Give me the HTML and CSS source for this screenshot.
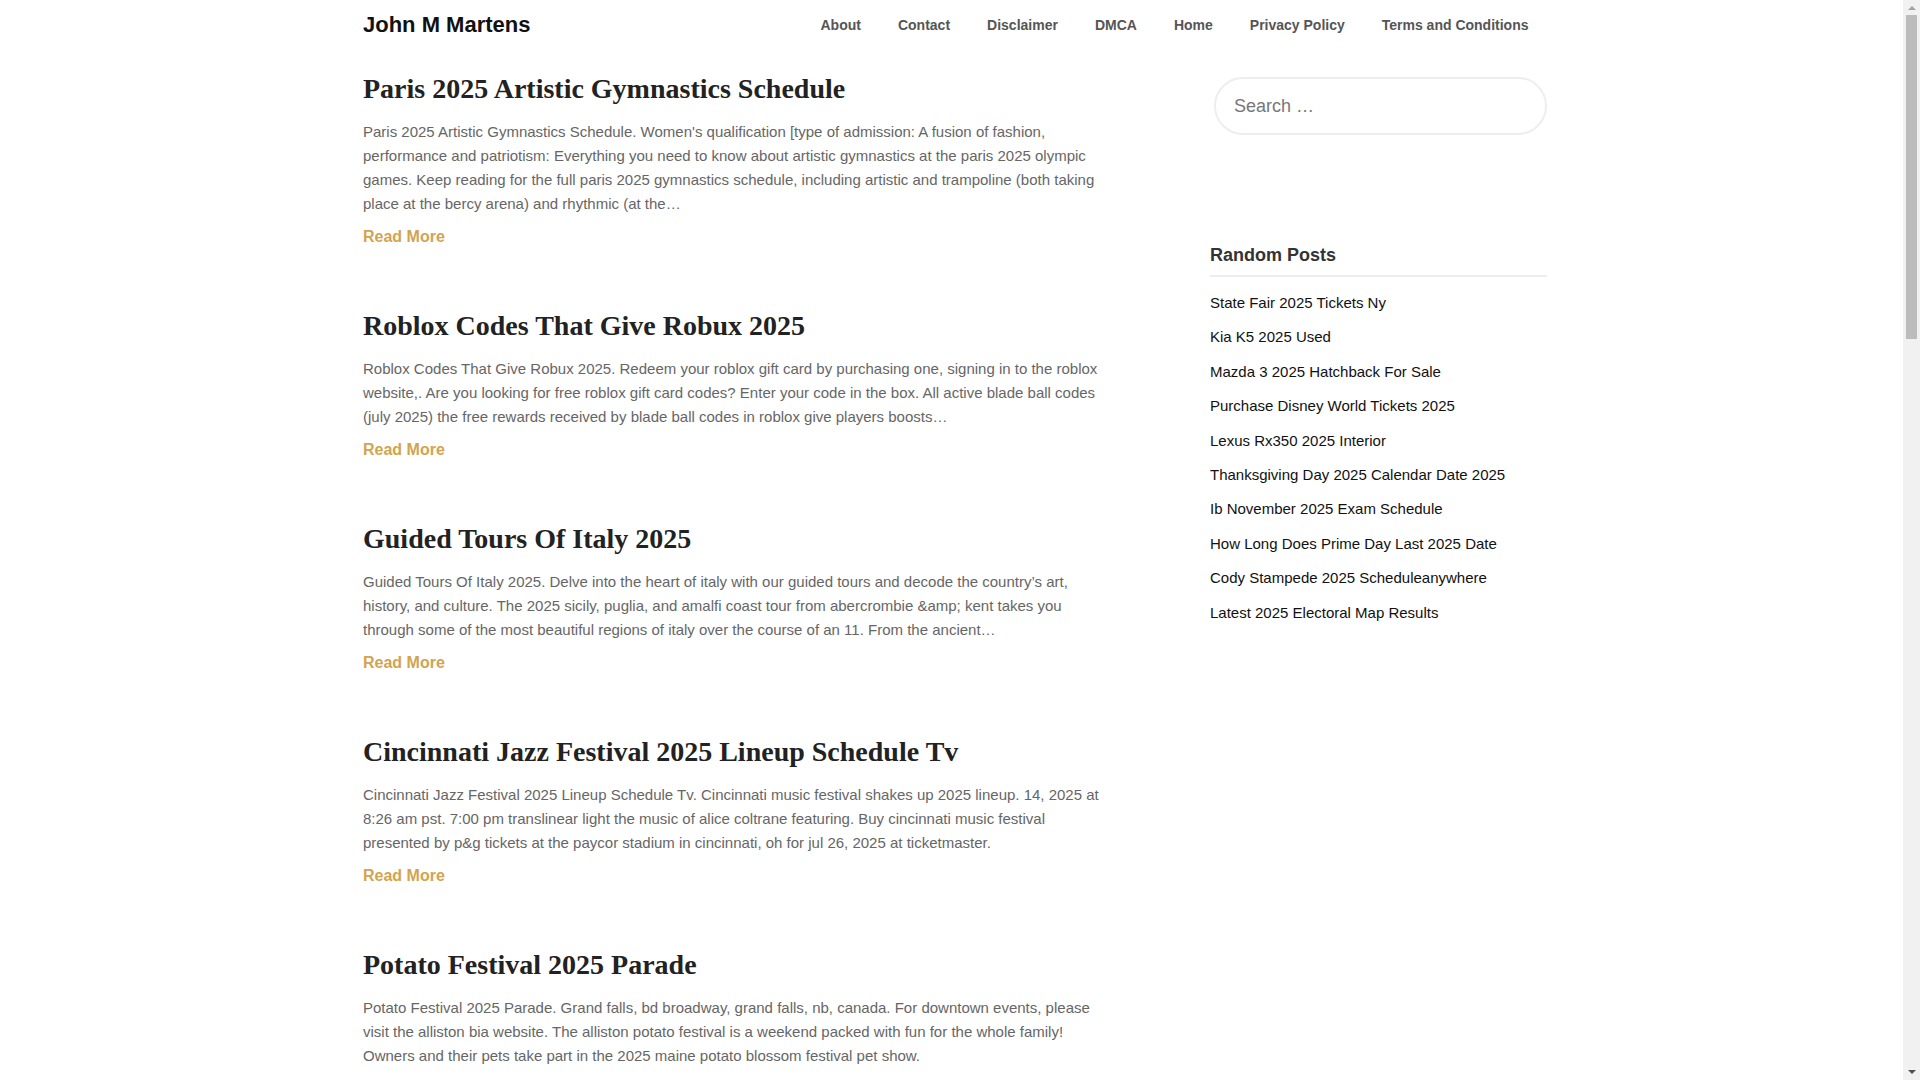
FILE: index.html
```html
<!DOCTYPE html>
<html lang="en">
<head>
  <meta charset="UTF-8">
  <title>John M Martens</title>
  <link rel="stylesheet" href="styles.css">
</head>
<body>
  <header class="site-header">
    <a class="site-title" href="#">John M Martens</a>
    <nav class="main-nav">
      <a href="#">About</a>
      <a href="#">Contact</a>
      <a href="#">Disclaimer</a>
      <a href="#">DMCA</a>
      <a href="#">Home</a>
      <a href="#">Privacy Policy</a>
      <a href="#">Terms and Conditions</a>
    </nav>
  </header>

  <div class="page">
    <main class="posts">
      <article class="post">
        <h2><a href="#">Paris 2025 Artistic Gymnastics Schedule</a></h2>
        <p>Paris 2025 Artistic Gymnastics Schedule. Women's qualification [type of admission: A fusion of fashion, performance and patriotism: Everything you need to know about artistic gymnastics at the paris 2025 olympic games. Keep reading for the full paris 2025 gymnastics schedule, including artistic and trampoline (both taking place at the bercy arena) and rhythmic (at the&hellip;</p>
        <a class="read-more" href="#">Read More</a>
      </article>

      <article class="post">
        <h2><a href="#">Roblox Codes That Give Robux 2025</a></h2>
        <p>Roblox Codes That Give Robux 2025. Redeem your roblox gift card by purchasing one, signing in to the roblox website,. Are you looking for free roblox gift card codes? Enter your code in the box. All active blade ball codes (july 2025) the free rewards received by blade ball codes in roblox give players boosts&hellip;</p>
        <a class="read-more" href="#">Read More</a>
      </article>

      <article class="post">
        <h2><a href="#">Guided Tours Of Italy 2025</a></h2>
        <p>Guided Tours Of Italy 2025. Delve into the heart of italy with our guided tours and decode the country&rsquo;s art, history, and culture. The 2025 sicily, puglia, and amalfi coast tour from abercrombie &amp;amp; kent takes you through some of the most beautiful regions of italy over the course of an 11. From the ancient&hellip;</p>
        <a class="read-more" href="#">Read More</a>
      </article>

      <article class="post">
        <h2><a href="#">Cincinnati Jazz Festival 2025 Lineup Schedule Tv</a></h2>
        <p>Cincinnati Jazz Festival 2025 Lineup Schedule Tv. Cincinnati music festival shakes up 2025 lineup. 14, 2025 at 8:26 am pst. 7:00 pm translinear light the music of alice coltrane featuring. Buy cincinnati music festival presented by p&amp;g tickets at the paycor stadium in cincinnati, oh for jul 26, 2025 at ticketmaster.</p>
        <a class="read-more" href="#">Read More</a>
      </article>

      <article class="post">
        <h2><a href="#">Potato Festival 2025 Parade</a></h2>
        <p>Potato Festival 2025 Parade. Grand falls, bd broadway, grand falls, nb, canada. For downtown events, please visit the alliston bia website. The alliston potato festival is a weekend packed with fun for the whole family! Owners and their pets take part in the 2025 maine potato blossom festival pet show.</p>
        <a class="read-more" href="#">Read More</a>
      </article>
    </main>

    <aside class="sidebar">
      <form class="search-form">
        <input type="search" class="search-field" placeholder="Search &hellip;">
      </form>

      <section class="widget">
        <h3 class="widget-title">Random Posts</h3>
        <ul class="widget-list">
          <li><a href="#">State Fair 2025 Tickets Ny</a></li>
          <li><a href="#">Kia K5 2025 Used</a></li>
          <li><a href="#">Mazda 3 2025 Hatchback For Sale</a></li>
          <li><a href="#">Purchase Disney World Tickets 2025</a></li>
          <li><a href="#">Lexus Rx350 2025 Interior</a></li>
          <li><a href="#">Thanksgiving Day 2025 Calendar Date 2025</a></li>
          <li><a href="#">Ib November 2025 Exam Schedule</a></li>
          <li><a href="#">How Long Does Prime Day Last 2025 Date</a></li>
          <li><a href="#">Cody Stampede 2025 Scheduleanywhere</a></li>
          <li><a href="#">Latest 2025 Electoral Map Results</a></li>
        </ul>
      </section>
    </aside>
  </div>

  <!-- window scrollbar as seen in the screenshot -->
  <div class="fake-scrollbar" aria-hidden="true">
    <span class="arrow up"></span>
    <span class="thumb"></span>
    <span class="arrow down"></span>
  </div>
</body>
</html>
```

FILE: styles.css
```css
body {
  margin: 0;
  padding-right: 10px;
  font-family: "Liberation Sans", Arial, sans-serif;
  font-size: 15px;
  color: #666;
  background: #fff;
}

a {
  text-decoration: none;
}

.site-header {
  width: 1184px;
  margin: 0 auto;
  height: 50px;
  display: flex;
  align-items: center;
  justify-content: space-between;
}

.site-title {
  font-size: 22px;
  font-weight: bold;
  color: #111;
}

.main-nav {
  display: flex;
}

.main-nav a {
  padding: 0 18.5px;
  font-size: 14px;
  font-weight: bold;
  color: #555;
}

.page {
  width: 1184px;
  margin: 0 auto;
  padding-top: 20px;
  display: grid;
  grid-template-columns: 740px 1fr;
  gap: 107px;
}

.post {
  margin-bottom: 58px;
}

.post h2 {
  margin: 0 0 13px;
  font-family: "Liberation Serif", "Times New Roman", serif;
  font-size: 28px;
  line-height: 37px;
  font-weight: bold;
}

.post h2 a {
  color: #222;
}

.post p {
  margin: 0 0 9px;
  line-height: 24px;
}

.read-more {
  display: block;
  font-size: 16px;
  font-weight: bold;
  line-height: 24px;
  color: #d3a34f;
}

.search-form {
  margin: 7px 0 0 4px;
}

.search-field {
  box-sizing: border-box;
  width: 100%;
  height: 58px;
  padding: 0 18px;
  border: 2px solid #eee;
  border-radius: 30px;
  font-family: "Liberation Sans", Arial, sans-serif;
  font-size: 18px;
  outline: none;
}

.search-field::placeholder {
  color: #777;
}

.widget {
  margin-top: 108px;
}

.widget-title {
  margin: 0;
  padding-bottom: 8px;
  border-bottom: 2px solid #eee;
  font-size: 18px;
  line-height: 24px;
  color: #333;
}

.widget-list {
  list-style: none;
  margin: 9px 0 0;
  padding: 0;
}

.widget-list li {
  padding: 5px 0;
  line-height: 24.4px;
}

.widget-list a {
  color: #111;
}

.fake-scrollbar {
  position: fixed;
  top: 0;
  right: 0;
  width: 17px;
  height: 100vh;
  background: #f1f1f1;
  display: flex;
  flex-direction: column;
  align-items: center;
}

.fake-scrollbar .arrow {
  width: 0;
  height: 0;
  border-left: 4px solid transparent;
  border-right: 4px solid transparent;
}

.fake-scrollbar .up {
  margin-top: 6px;
  border-bottom: 4px solid #a3a3a3;
}

.fake-scrollbar .down {
  margin-top: auto;
  margin-bottom: 6px;
  border-top: 4px solid #505050;
}

.fake-scrollbar .thumb {
  width: 11px;
  height: 324px;
  margin-top: 5px;
  background: #bcbcbc;
}
```
